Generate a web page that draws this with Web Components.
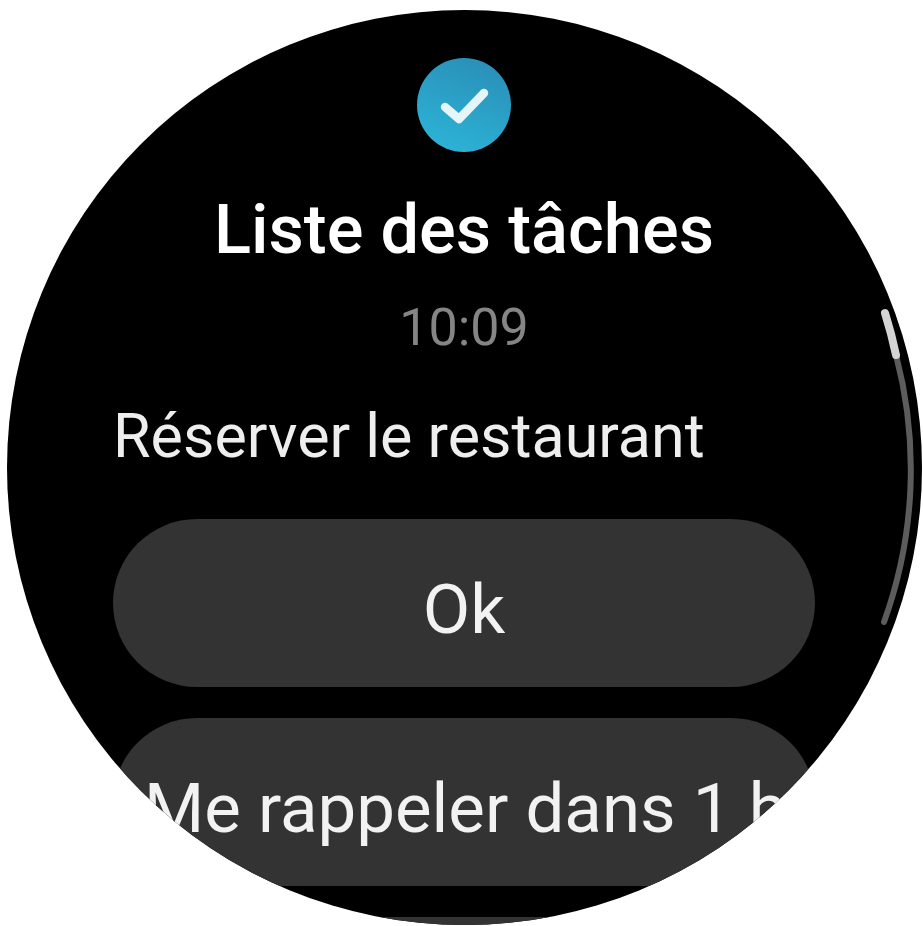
<!DOCTYPE html>
<html lang="fr">
<head>
<meta charset="utf-8">
<title>Liste des tâches</title>
<style>
  html, body { margin: 0; height: 100%; background: #fff; }
  body { font-family: Roboto, "Liberation Sans", sans-serif; overflow: hidden; }
</style>
</head>
<body>
<watch-face>
  <notif-header slot="header" title-text="Liste des tâches" time="10:09"></notif-header>
  <p slot="message">Réserver le restaurant</p>
  <pill-button>Ok</pill-button>
  <pill-button align="start">Me rappeler dans 1 heure</pill-button>
  <pill-button></pill-button>
</watch-face>

<script>
class WatchFace extends HTMLElement {
    constructor() {
        super();
        this.shadowDOM = this.attachShadow({ mode: "open" });
    }
    connectedCallback() {
        this.shadowDOM.innerHTML = `
        <style>
            :host {
                display: block;
                position: absolute;
                left: 7px;
                top: 10px;
                width: 915px;
                height: 915px;
                border-radius: 50%;
                overflow: hidden;
                background: #000;
            }
            .content {
                display: flex;
                flex-direction: column;
                padding: 48px 107px 0 106px;
                filter: blur(.5px);
            }
            ::slotted(p) {
                margin: 0 0 47px;
                color: #eeeeee;
                font-size: 61px;
                line-height: 72px;
                white-space: nowrap;
            }
            .buttons {
                display: flex;
                flex-direction: column;
                gap: 31px;
            }
            svg {
                position: absolute;
                left: 0;
                top: 0;
            }
        </style>
        <div class="content">
            <slot name="header"></slot>
            <slot name="message"></slot>
            <div class="buttons"><slot></slot></div>
        </div>
        <svg width="915" height="915" viewBox="0 0 915 915" fill="none" stroke-linecap="round">
            <path d="M 889 345 A 448 448 0 0 1 877 612" stroke="#5c5c5c" stroke-width="6"/>
            <path d="M 878 303 A 448 448 0 0 1 889 345" stroke="#d4d4d4" stroke-width="8"/>
        </svg>
        `;
    }
}

class NotifHeader extends HTMLElement {
    constructor() {
        super();
        this.shadowDOM = this.attachShadow({ mode: "open" });
    }
    connectedCallback() {
        this.shadowDOM.innerHTML = `
        <style>
            :host {
                display: flex;
                flex-direction: column;
                align-items: center;
                margin-bottom: 41px;
            }
            .app-icon {
                width: 94px;
                height: 94px;
                display: block;
                margin-bottom: 38px;
            }
            h1 {
                margin: 0 0 27px;
                color: #fff;
                font-size: 68.6px;
                font-weight: 500;
                line-height: 80px;
                white-space: nowrap;
            }
            .time {
                color: #858585;
                font-size: 52px;
                line-height: 62px;
            }
        </style>
        <svg class="app-icon" viewBox="0 0 94 94">
            <defs>
                <linearGradient id="tile" x1="0.7" y1="0" x2="0.3" y2="1">
                    <stop offset="0" stop-color="#2a8fb8"/>
                    <stop offset="1" stop-color="#2cb3d6"/>
                </linearGradient>
            </defs>
            <circle cx="47" cy="47" r="47" fill="url(#tile)"/>
            <path d="M 28 49 L 42 61 L 67 35" fill="none" stroke="#e6f5fa" stroke-width="8.5" stroke-linecap="round" stroke-linejoin="round"/>
        </svg>
        <h1>${this.getAttribute("title-text")}</h1>
        <div class="time">${this.getAttribute("time")}</div>
        `;
    }
}

class PillButton extends HTMLElement {
    constructor() {
        super();
        this.shadowDOM = this.attachShadow({ mode: "open" });
    }
    connectedCallback() {
        const start = this.getAttribute("align") === "start";
        this.shadowDOM.innerHTML = `
        <style>
            :host {
                display: flex;
                align-items: center;
                justify-content: ${start ? "flex-start" : "center"};
                box-sizing: border-box;
                height: 168px;
                padding: 13px 0 0 ${start ? "31px" : "0"};
                border-radius: 84px;
                overflow: hidden;
                background: #333;
                color: #f2f2f2;
                font-size: 69px;
                white-space: nowrap;
            }
        </style>
        <slot></slot>
        `;
    }
}

customElements.define("watch-face", WatchFace);
customElements.define("notif-header", NotifHeader);
customElements.define("pill-button", PillButton);
</script>
</body>
</html>
